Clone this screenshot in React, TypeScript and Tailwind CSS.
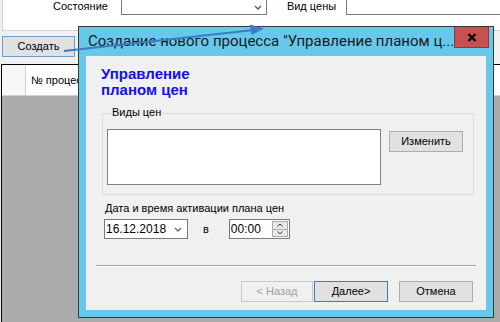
import React from "react";

export default function App() {
  return (
    <div className="relative w-[500px] h-[322px] overflow-hidden bg-[#f0f0f0] font-['Liberation_Sans',sans-serif] text-[11px] text-black">
      {/* Filter panel */}
      <div className="h-[31px] ml-[2px] bg-white border-l border-b border-[#d5d5d5] flex items-start">
        <span className="ml-[50px] mt-[0px] leading-[12px]">Состояние</span>
        <div className="ml-[13px] w-[146px] h-[15px] border border-t-0 border-[#7a7a7a] flex justify-end items-center pr-[4px]">
          <svg width="8" height="5" viewBox="0 0 8 5">
            <path d="M1 1 L4 4 L7 1" fill="none" stroke="#555" strokeWidth="1.3" />
          </svg>
        </div>
        <span className="ml-[20px] leading-[12px]">Вид цены</span>
        <div className="ml-[10px] flex-1 h-[15px] border border-t-0 border-r-0 border-[#7a7a7a] bg-white" />
      </div>

      {/* Button row */}
      <div className="h-[33px] pl-[2px] pt-[5px]">
        <button className="w-[73px] h-[21px] border border-[#6a9fd4] bg-[#e1e1e1] text-[11px] leading-[19px] font-['Liberation_Sans',sans-serif]">
          Создать
        </button>
      </div>

      {/* Grid */}
      <div className="ml-[1px] h-[258px] border-l border-t border-black bg-[#ababab]">
        <div className="h-[31px] flex bg-white border-b border-[#d0d0d0]">
          <div className="w-[24px] border-r border-[#d0d0d0] bg-[#f7f7f7]" />
          <div className="pl-[5px] flex items-center pt-[1px]">№ процесса</div>
        </div>
      </div>

      {/* Dialog window */}
      <div className="absolute left-[78px] top-[26px] w-[416px] h-[292px] border border-[#3a3a3a] bg-[#66c9ec] flex flex-col">
        <div className="h-[29px] flex items-center pl-[9px] pb-[1px]">
          <span className="font-['Roboto',sans-serif] text-[15px] leading-[20px] text-[#1a1a1a] whitespace-nowrap">
            Создание нового процесса "Управление планом ц...
          </span>
        </div>
        <div className="absolute right-[4px] top-0 w-[35px] h-[21px] bg-[#c75050] border border-t-0 border-[#8a3a3a] flex items-center justify-center">
          <svg width="10" height="9" viewBox="0 0 10 9">
            <path d="M1.5 1 L8.5 8 M8.5 1 L1.5 8" stroke="#000" strokeWidth="2.2" />
          </svg>
        </div>

        {/* Client area */}
        <div className="mx-[7px] h-[254px] bg-[#f0f0f0] flex flex-col">
          <div className="ml-[15px] mt-[10px] font-bold text-[15px] leading-[16px] text-[#1010f0]">
            Управление
            <br />
            планом цен
          </div>

          {/* Group box */}
          <div className="relative ml-[16px] mt-[15px] w-[372px] h-[82px] border border-[#d8d8d8] rounded-[3px] flex items-start pt-[15px] pl-[4px]">
            <span className="absolute left-[8px] top-[-8px] px-[1px] bg-[#f0f0f0] leading-[13px]">Виды цен</span>
            <div className="w-[274px] h-[56px] bg-white border border-[#828282]" />
            <button className="ml-[8px] mt-[2px] w-[74px] h-[21px] border border-[#adadad] bg-[#e1e1e1] text-[11px] leading-[19px] font-['Liberation_Sans',sans-serif]">
              Изменить
            </button>
          </div>

          <div className="ml-[19px] mt-[7px] leading-[13px]">Дата и время активации плана цен</div>

          <div className="ml-[18px] mt-[4px] flex items-center">
            <div className="w-[84px] h-[20px] bg-white border border-[#7a7a7a] flex items-center pl-[1px] pr-[5px] justify-between">
              <span className="text-[12px]">16.12.2018</span>
              <svg width="8" height="5" viewBox="0 0 8 5">
                <path d="M1 1 L4 4 L7 1" fill="none" stroke="#666" strokeWidth="1.3" />
              </svg>
            </div>
            <span className="ml-[15px] text-[11px]">в</span>
            <div className="ml-[20px] w-[61px] h-[20px] bg-white border border-[#7a7a7a] flex items-center justify-between pl-[1px] pr-[1px]">
              <span className="text-[12px]">00:00</span>
              <div className="w-[16px] h-[16px] flex flex-col border border-[#adadad] bg-[#e8e8e8]">
                <div className="flex-1 flex items-center justify-center border-b border-[#adadad]">
                  <svg width="6" height="4" viewBox="0 0 6 4">
                    <path d="M0.5 3.5 L3 1 L5.5 3.5" fill="none" stroke="#333" strokeWidth="1" />
                  </svg>
                </div>
                <div className="flex-1 flex items-center justify-center">
                  <svg width="6" height="4" viewBox="0 0 6 4">
                    <path d="M0.5 0.5 L3 3 L5.5 0.5" fill="none" stroke="#333" strokeWidth="1" />
                  </svg>
                </div>
              </div>
            </div>
          </div>

          {/* Separator */}
          <div className="ml-[10px] mt-[26px] w-[380px] h-[2px] border-t border-[#a0a0a0] border-b border-b-white" />

          {/* Footer buttons */}
          <div className="mt-[14px] ml-[155px] flex">
            <button className="w-[72px] h-[21px] border border-[#c8c8c8] bg-[#f0f0f0] text-[#a0a0a0] text-[11px] leading-[19px] font-['Liberation_Sans',sans-serif]">
              &lt; Назад
            </button>
            <button className="ml-[1px] w-[74px] h-[21px] border border-[#3c7fb1] bg-[#e1e1e1] text-[11px] leading-[19px] font-['Liberation_Sans',sans-serif]">
              Далее&gt;
            </button>
            <button className="ml-[11px] w-[74px] h-[21px] border border-[#adadad] bg-[#e1e1e1] text-[11px] leading-[19px] font-['Liberation_Sans',sans-serif]">
              Отмена
            </button>
          </div>
        </div>
      </div>

      {/* Annotation arrow */}
      <svg className="absolute left-0 top-0 pointer-events-none" width="500" height="322" viewBox="0 0 500 322">
        <line x1="64" y1="51" x2="254" y2="30" stroke="#3a7dc0" strokeWidth="2" />
        <polygon points="264,28.5 250,24.5 251.5,35" fill="#3a7dc0" />
      </svg>
    </div>
  );
}
